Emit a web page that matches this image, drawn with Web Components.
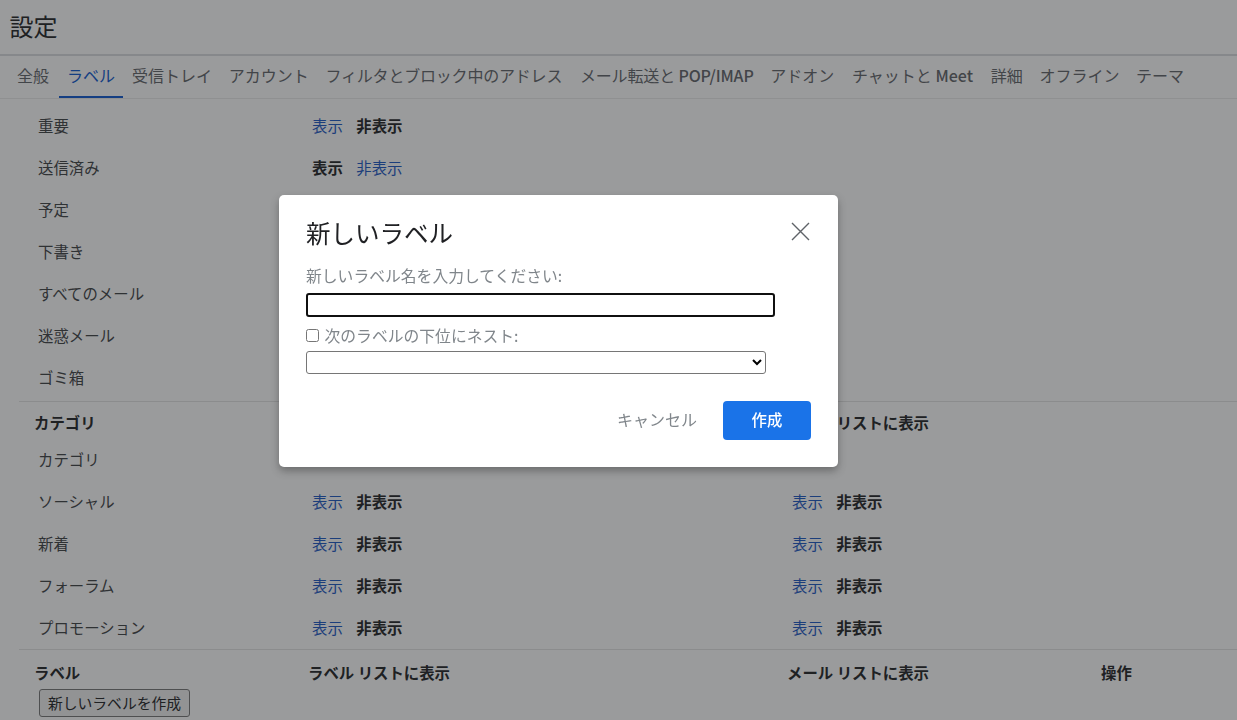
<!DOCTYPE html>
<html lang="ja"><head><meta charset="utf-8">
<style>
html,body{margin:0;padding:0;height:720px;overflow:hidden;background:#fff;font-family:"Noto Sans CJK JP","Noto Sans",sans-serif;}
</style></head><body>
<settings-page>
  <settings-row label="重要" c2="hide"></settings-row>
  <settings-row label="送信済み" c2="show"></settings-row>
  <settings-row label="予定"></settings-row>
  <settings-row label="下書き"></settings-row>
  <settings-row label="すべてのメール"></settings-row>
  <settings-row label="迷惑メール"></settings-row>
  <settings-row label="ゴミ箱"></settings-row>
  <section-head label="カテゴリ" c2="ラベル リストに表示" c3="メール リストに表示" style="--mt:3px;--pt:4px;--hh:37px"></section-head>
  <settings-row label="カテゴリ" style="--h:42px"></settings-row>
  <settings-row label="ソーシャル" c2="hide" c3="hide"></settings-row>
  <settings-row label="新着" c2="hide" c3="hide"></settings-row>
  <settings-row label="フォーラム" c2="hide" c3="hide"></settings-row>
  <settings-row label="プロモーション" c2="hide" c3="hide"></settings-row>
  <section-head label="ラベル" c2="ラベル リストに表示" c3="メール リストに表示" c4="操作" style="--mt:1px;--pt:5px;--hh:40px"></section-head>
  <create-button>新しいラベルを作成</create-button>
</settings-page>
<label-dialog></label-dialog>
<script>
const FONT='"Noto Sans CJK JP","Noto Sans",sans-serif';
class SettingsPage extends HTMLElement{constructor(){super();this.attachShadow({mode:'open'}).innerHTML=`
<style>
:host{display:block;height:720px;overflow:hidden;font-family:${FONT};color:#202124}
header{border-bottom:2px solid #dadce0;display:flex;align-items:center;padding:0 0 2px 9.5px;box-sizing:content-box;height:52px;font-size:24px;line-height:32px}
nav{display:flex;height:42px;border-bottom:1px solid #ebebeb;font-size:16px;color:#5f6368;padding-left:8.7px}
nav span{padding:0 8.35px;line-height:38px;height:42px;box-sizing:border-box;white-space:nowrap}
nav span.on{color:#0b57d0;border-bottom:2px solid #0b57d0;margin-left:1.2px;padding:0 8.4px 0 8.4px;margin-right:.4px}
nav span.n1{letter-spacing:-.2px}
nav span.n2{letter-spacing:-.15px;margin-left:1px}
nav span.n3,nav span.n4{margin-left:1px}
nav b{font-weight:500}
main{display:block;padding-top:5px}
</style>
<header>設定</header>
<nav><span>全般</span><span class="on">ラベル</span><span>受信トレイ</span><span>アカウント</span><span class="n1">フィルタとブロック中のアドレス</span><span class="n2">メール転送と <b>POP/IMAP</b></span><span>アドオン</span><span class="n3">チャットと <b>Meet</b></span><span class="n4">詳細</span><span>オフライン</span><span>テーマ</span></nav>
<main><slot></slot></main>`}}
customElements.define('settings-page',SettingsPage);

function pair(mode){
  const link='color:#1a56c4',bold='font-weight:700;color:#202124';
  return mode==='hide'?`<span style="${link}">表示</span><span style="${bold}">非表示</span>`
                      :`<span style="${bold}">表示</span><span style="${link}">非表示</span>`;
}
class SettingsRow extends HTMLElement{connectedCallback(){
  const a=n=>this.getAttribute(n);
  this.attachShadow({mode:'open'}).innerHTML=`
<style>
:host{display:grid;grid-template-columns:312px 480px 1fr;height:var(--h,42px);align-items:center;font-size:15.4px;color:#3c4043;line-height:20px}
.l{padding-left:38px}
.p{display:flex;gap:13.5px}
</style>
<div class="l">${a('label')}</div>
<div class="p">${a('c2')?pair(a('c2')):''}</div>
<div class="p">${a('c3')?pair(a('c3')):''}</div>`}}
customElements.define('settings-row',SettingsRow);

class SectionHead extends HTMLElement{connectedCallback(){
  const a=n=>this.getAttribute(n)||'';
  this.attachShadow({mode:'open'}).innerHTML=`
<style>
:host{display:grid;grid-template-columns:289px 479px 314px 1fr;height:var(--hh,39px);margin:var(--mt,0) 0 0 19px;border-top:1px solid #e3e3e3;align-items:center;font-size:15.4px;font-weight:700;line-height:20px;color:#202124;box-sizing:border-box;padding-top:var(--pt,0)}
.l{padding-left:15px}
</style>
<div class="l">${a('label')}</div><div>${a('c2')}</div><div>${a('c3')}</div><div>${a('c4')}</div>`}}
customElements.define('section-head',SectionHead);

class CreateButton extends HTMLElement{constructor(){super();this.attachShadow({mode:'open'}).innerHTML=`
<style>
:host{display:block;padding-left:39px}
button{display:block;width:151px;height:28px;padding:0 0 1px;font:14.8px/20px ${FONT};color:#202124;background:#f0f0f0;border:1px solid #767676;border-radius:3px}
</style><button><slot></slot></button>`}}
customElements.define('create-button',CreateButton);

class LabelDialog extends HTMLElement{constructor(){super();this.attachShadow({mode:'open'}).innerHTML=`
<style>
:host{position:fixed;inset:0;display:block;background:rgba(32,33,36,.45);font-family:${FONT}}
.d{position:absolute;left:279px;top:195px;width:559px;height:272px;box-sizing:border-box;background:#fff;border-radius:5px;padding:22px 27px 27px;box-shadow:0 4px 8px rgba(0,0,0,.3);display:flex;flex-direction:column}
.top{display:flex;justify-content:space-between;height:37px;align-items:flex-start}
h2{margin:-1px 0 0;font-weight:400;font-size:24.5px;line-height:34px;color:#202124}
svg{display:block;margin:5px 1px 0 0}
.lab{font-size:15.8px;line-height:22px;color:#80868b;margin-top:11px;white-space:nowrap}
input[type=text]{display:block;width:469px;height:24px;box-sizing:border-box;border:2px solid #101010;border-radius:3px;margin:6px 0 0;padding:0;background:#fff;outline:none}
.nest{display:flex;align-items:center;height:24px;margin-top:6px;font-size:15.8px;color:#80868b;white-space:nowrap}
input[type=checkbox]{appearance:none;width:13px;height:13px;margin:0 5.5px 0 0;border:1px solid #767676;border-radius:2.5px;box-sizing:border-box;background:#fff}
select{display:block;width:460px;height:23px;margin:4px 0 0;box-sizing:border-box;border:1px solid #767676;border-radius:3px;background:#fff;font-size:13px}
.act{display:flex;justify-content:flex-end;align-items:center;gap:26px;margin-top:27px}
.cancel{font-size:16px;line-height:22px;color:#80868b;padding-bottom:3px}
.ok{width:88px;height:39px;border:0;border-radius:4px;background:#1a73e8;color:#fff;font:500 15.4px/20px ${FONT};padding:0 0 3px}
</style>
<div class="d" role="dialog">
  <div class="top"><h2>新しいラベル</h2>
    <svg width="19" height="19" viewBox="0 0 19 19"><path d="M1 1L18 18M18 1L1 18" stroke="#5f6368" stroke-width="1.4" fill="none"/></svg></div>
  <div class="lab">新しいラベル名を入力してください:</div>
  <input type="text">
  <div class="nest"><input type="checkbox"><span>次のラベルの下位にネスト:</span></div>
  <select><option></option></select>
  <div class="act"><span class="cancel">キャンセル</span><button class="ok">作成</button></div>
</div>`}}
customElements.define('label-dialog',LabelDialog);
</script>
</body></html>
